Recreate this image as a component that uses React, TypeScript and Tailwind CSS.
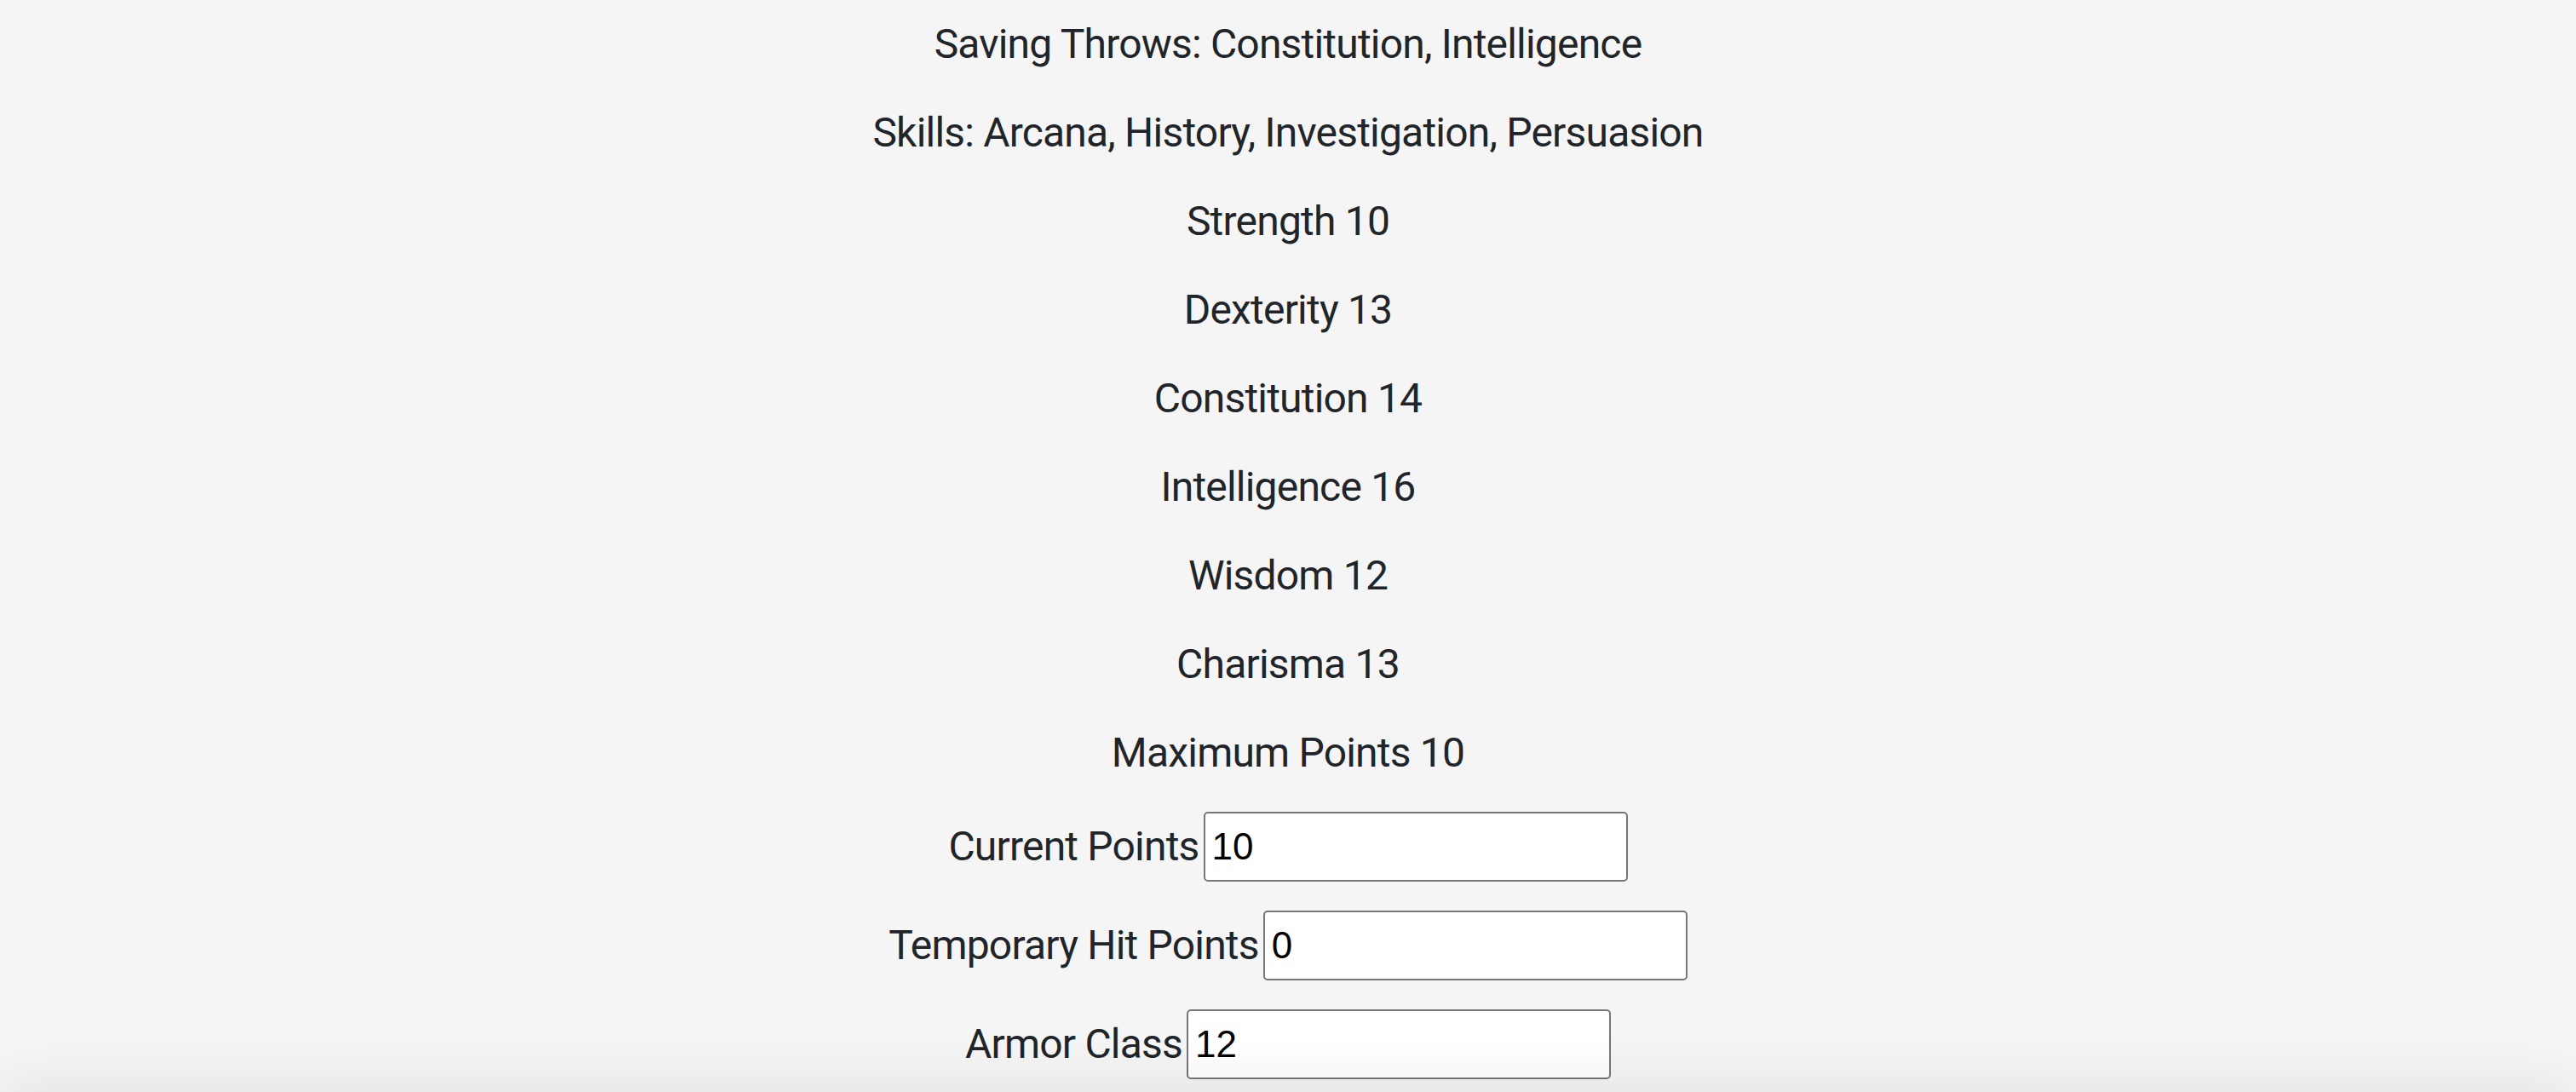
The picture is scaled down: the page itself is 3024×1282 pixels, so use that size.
import { useState } from "react";

const lines = [
  "Saving Throws: Constitution, Intelligence",
  "Skills: Arcana, History, Investigation, Persuasion",
  "Strength 10",
  "Dexterity 13",
  "Constitution 14",
  "Intelligence 16",
  "Wisdom 12",
  "Charisma 13",
  "Maximum Points 10",
];

export default function App() {
  const [current, setCurrent] = useState("10");
  const [temp, setTemp] = useState("0");
  const [armor, setArmor] = useState("12");

  const fields = [
    { label: "Current Points", value: current, set: setCurrent },
    { label: "Temporary Hit Points", value: temp, set: setTemp },
    { label: "Armor Class", value: armor, set: setArmor },
  ];

  return (
    <div
      className="min-h-screen bg-[#f5f5f5] text-[#212529] pt-[16px] text-center overflow-hidden"
      style={{ fontFamily: "Roboto, Inter, sans-serif" }}
    >
      {lines.map((line) => (
        <p key={line} className="text-[48px] leading-[72px] mb-[32px] tracking-[-0.8px]">
          {line}
        </p>
      ))}

      {fields.map((f) => (
        <div key={f.label} className="flex justify-center items-center h-[84px] mb-[32px]">
          <label className="text-[48px] leading-[72px] tracking-[-0.8px] mr-[5px]">{f.label}</label>
          <input
            type="text"
            value={f.value}
            onChange={(e) => f.set(e.target.value)}
            className="w-[498px] h-[82px] bg-white border-2 border-[#767676] rounded-[5px] px-[8px] text-[44px] leading-[50px] text-black outline-none font-['Liberation_Sans',Arial,sans-serif]"
          />
        </div>
      ))}

      <div className="fixed left-0 right-0 top-full h-[40px] bg-white shadow-[0_0_70px_rgba(0,0,0,0.12)]" />
    </div>
  );
}
